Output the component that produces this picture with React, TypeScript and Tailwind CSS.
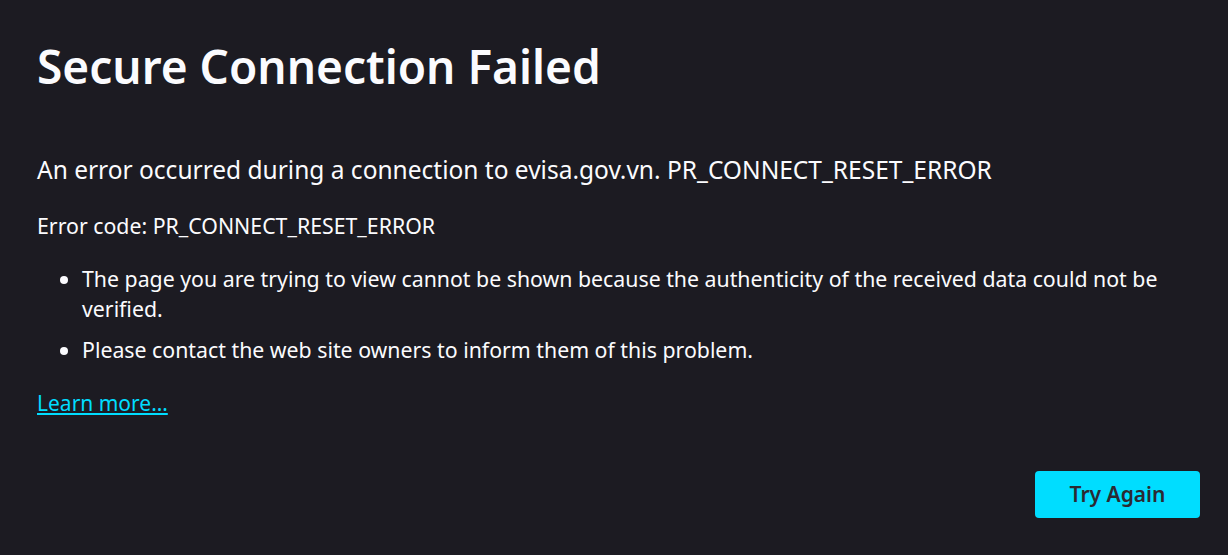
export default function App() {
  return (
    <div className="min-h-screen bg-[#1c1b22] font-['Noto_Sans',sans-serif] text-[#fbfbfe]">
      <div className="w-[1200px] pl-[37px] pt-[37px]">
        <h1 className="text-[46px] font-semibold leading-[58px]">Secure Connection Failed</h1>
        <p className="mt-[60px] text-[24.5px] leading-[30px]">
          An error occurred during a connection to evisa.gov.vn. PR_CONNECT_RESET_ERROR
        </p>
        <p className="mt-[27px] text-[21.3px] leading-[28px]">Error code: PR_CONNECT_RESET_ERROR</p>
        <ul className="mt-[24px] list-disc pl-[45px] text-[21.3px] leading-[30px]">
          <li>
            The page you are trying to view cannot be shown because the authenticity of the received data could not
            be verified.
          </li>
          <li className="mt-[11px]">Please contact the web site owners to inform them of this problem.</li>
        </ul>
        <a href="#" className="mt-[23px] block w-fit text-[21px] leading-[30px] text-[#00ddff] underline">
          Learn more…
        </a>
        <div className="mt-[53px] flex justify-end">
          <button className="h-[47px] w-[165px] rounded-[4px] bg-[#00ddff] text-[21px] font-semibold text-[#2b2a33]">
            Try Again
          </button>
        </div>
      </div>
    </div>
  );
}
